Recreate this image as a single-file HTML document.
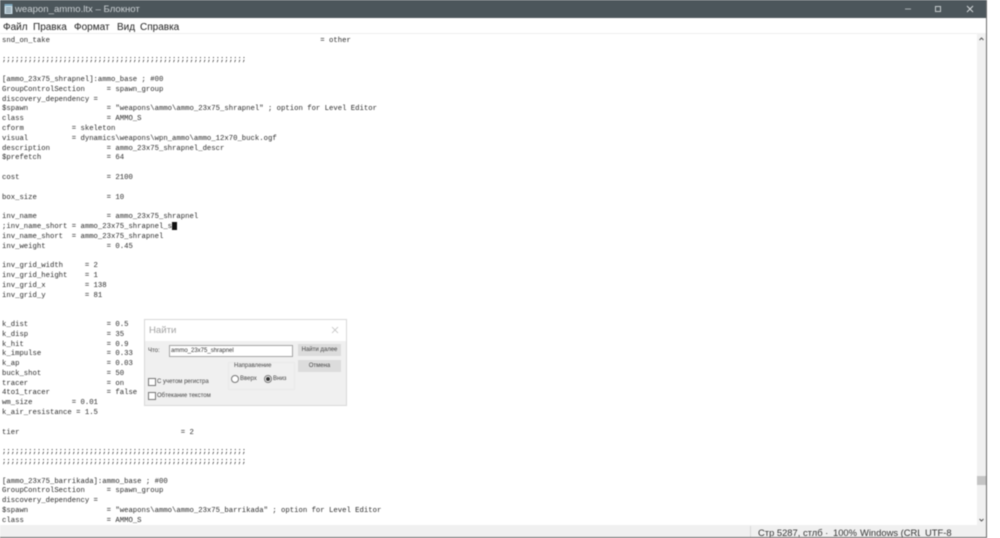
<!DOCTYPE html>
<html lang="ru">
<head>
<meta charset="utf-8">
<style>
html,body{margin:0;padding:0;background:#fff}
body{width:1000px;height:538px;overflow:hidden;position:relative;font-family:"Liberation Sans",sans-serif}
.a{position:absolute}
#wrap{position:absolute;left:0;top:0;width:1000px;height:538px;filter:blur(.4px);overflow:hidden}
#title{left:0;top:0;width:986px;height:18px;background:#4c565b}
#menu span{position:absolute;top:0;font-size:10px;color:#222;white-space:nowrap}
#ed{left:2px;top:36.8px;margin:0;font:7.27px/9.8px "Liberation Mono",monospace;color:#2a2a2a;white-space:pre}
.l{position:absolute;font-size:6px;color:#444;white-space:nowrap}
.cb{position:absolute;width:6px;height:6px;border:1px solid #777;background:#fff}
.rb{position:absolute;width:6px;height:6px;border:1px solid #777;border-radius:50%;background:#fff}
.btn{position:absolute;left:298px;width:43px;height:12px;background:#dcdcdc;font-size:6px;line-height:13px;text-align:center;color:#444}
.s{position:absolute;top:526px;font-size:9.4px;line-height:13px;color:#333;white-space:nowrap}
</style>
</head>
<body>
<div id="wrap">
<div class="a" id="title"></div>
<svg class="a" style="left:4px;top:4px" width="9" height="10" viewBox="0 0 9 10"><rect x="0.5" y="0" width="8" height="10" fill="#c8dbe4"/><rect x="0.5" y="0" width="8" height="2" fill="#7fa7bd"/><path d="M2 4h5M2 6h5M2 8h5" stroke="#6b7c86" stroke-width=".7"/></svg>
<div class="a" style="left:15px;top:3px;font-size:9.6px;line-height:14px;color:#ccd1d4;white-space:nowrap">weapon_ammo.ltx – Блокнот</div>
<svg class="a" style="left:900px;top:0" width="86" height="18" viewBox="0 0 86 18"><path d="M5 9h6" stroke="#a9b0b3" stroke-width="1"/><rect x="35.5" y="6.5" width="5" height="5" fill="none" stroke="#c5cacc" stroke-width="1"/><path d="M67 6l6 6M73 6l-6 6" stroke="#d5d9db" stroke-width="1"/></svg>

<div class="a" id="menu" style="left:0;top:22px;width:986px;height:12px">
<span style="left:3px">Файл</span><span style="left:33px">Правка</span><span style="left:74px">Формат</span><span style="left:117px">Вид</span><span style="left:140px">Справка</span>
</div>
<div class="a" style="left:0;top:33px;width:977px;height:1px;background:#efefef"></div>

<pre class="a" id="ed">snd_on_take                                                              = other

;;;;;;;;;;;;;;;;;;;;;;;;;;;;;;;;;;;;;;;;;;;;;;;;;;;;;;;;

[ammo_23x75_shrapnel]:ammo_base ; #00
GroupControlSection     = spawn_group
discovery_dependency =
$spawn                  = "weapons\ammo\ammo_23x75_shrapnel" ; option for Level Editor
class                   = AMMO_S
cform           = skeleton
visual          = dynamics\weapons\wpn_ammo\ammo_12x70_buck.ogf
description             = ammo_23x75_shrapnel_descr
$prefetch               = 64

cost                    = 2100

box_size                = 10

inv_name                = ammo_23x75_shrapnel
;inv_name_short = ammo_23x75_shrapnel_s
inv_name_short  = ammo_23x75_shrapnel
inv_weight              = 0.45

inv_grid_width     = 2
inv_grid_height    = 1
inv_grid_x         = 138
inv_grid_y         = 81


k_dist                  = 0.5
k_disp                  = 35
k_hit                   = 0.9
k_impulse               = 0.33
k_ap                    = 0.03
buck_shot               = 50
tracer                  = on
4to1_tracer             = false
wm_size         = 0.01
k_air_resistance = 1.5

tier                                     = 2

;;;;;;;;;;;;;;;;;;;;;;;;;;;;;;;;;;;;;;;;;;;;;;;;;;;;;;;;
;;;;;;;;;;;;;;;;;;;;;;;;;;;;;;;;;;;;;;;;;;;;;;;;;;;;;;;;

[ammo_23x75_barrikada]:ammo_base ; #00
GroupControlSection     = spawn_group
discovery_dependency =
$spawn                  = "weapons\ammo\ammo_23x75_barrikada" ; option for Level Editor
class                   = AMMO_S</pre>
<div class="a" style="left:172px;top:222px;width:5px;height:8px;background:#111"></div>

<div class="a" style="left:977px;top:33px;width:9px;height:492px;background:#f1f1f1"></div>
<div class="a" style="left:977px;top:476px;width:9px;height:9px;background:#c4c4c4"></div>
<svg class="a" style="left:977px;top:35px" width="9" height="8" viewBox="0 0 9 8"><path d="M2.5 5L4.5 3L6.5 5" fill="none" stroke="#555" stroke-width="1"/></svg>
<svg class="a" style="left:977px;top:516px" width="9" height="8" viewBox="0 0 9 8"><path d="M2.5 3L4.5 5L6.5 3" fill="none" stroke="#555" stroke-width="1"/></svg>

<div class="a" style="left:0;top:525px;width:986px;height:12px;background:#f0f0f0"></div>
<div class="a" style="left:750px;top:526px;width:1px;height:11px;background:#d8d8d8"></div>
<div class="s" style="left:758px">Стр 5287, стлб ·</div>
<div class="s" style="left:833px">100%</div>
<div class="s" style="left:860px;width:60px;overflow:hidden">Windows (CRLF)</div>
<div class="s" style="left:925px">UTF-8</div>
<div class="a" style="left:0;top:537px;width:987px;height:1px;background:#666"></div>
<div class="a" style="left:986px;top:0;width:1px;height:538px;background:#6a6a6a"></div>

<div class="a" style="left:144px;top:319px;width:201px;height:85px;background:#f0f0f0;border:1px solid #d8d8d8"></div>
<div class="a" style="left:145px;top:320px;width:201px;height:21px;background:#fff"></div>
<div class="a" style="left:149px;top:323.5px;font-size:9.6px;line-height:13px;color:#a2a2a2">Найти</div>
<svg class="a" style="left:331px;top:326px" width="8" height="8" viewBox="0 0 8 8"><path d="M1 1l6 6M7 1l-6 6" stroke="#c0c0c0" stroke-width=".8"/></svg>
<div class="l" style="left:148px;top:348px">Что:</div>
<div class="a" style="left:169px;top:345px;width:122px;height:10px;background:#fff;border:1px solid #a5a5a5"></div>
<div class="l" style="left:171px;top:348px;color:#333">ammo_23x75_shrapnel</div>
<div class="btn" style="top:344px">Найти далее</div>
<div class="btn" style="top:360px">Отмена</div>
<div class="a" style="left:228px;top:362px;width:65px;height:26px;border:1px solid #e9e9e9"></div>
<div class="l" style="left:233px;top:363px;background:#f0f0f0;padding:0 1px">Направление</div>
<div class="rb" style="left:231px;top:375px"></div>
<div class="l" style="left:240px;top:376px">Вверх</div>
<div class="rb" style="left:264px;top:375px"></div>
<div class="a" style="left:266px;top:377px;width:4px;height:4px;border-radius:50%;background:#333"></div>
<div class="l" style="left:273px;top:376px">Вниз</div>
<div class="cb" style="left:148px;top:378px"></div>
<div class="l" style="left:157px;top:378.5px">С учетом регистра</div>
<div class="cb" style="left:148px;top:392px"></div>
<div class="l" style="left:157px;top:393px">Обтекание текстом</div>
</div>
</body>
</html>
